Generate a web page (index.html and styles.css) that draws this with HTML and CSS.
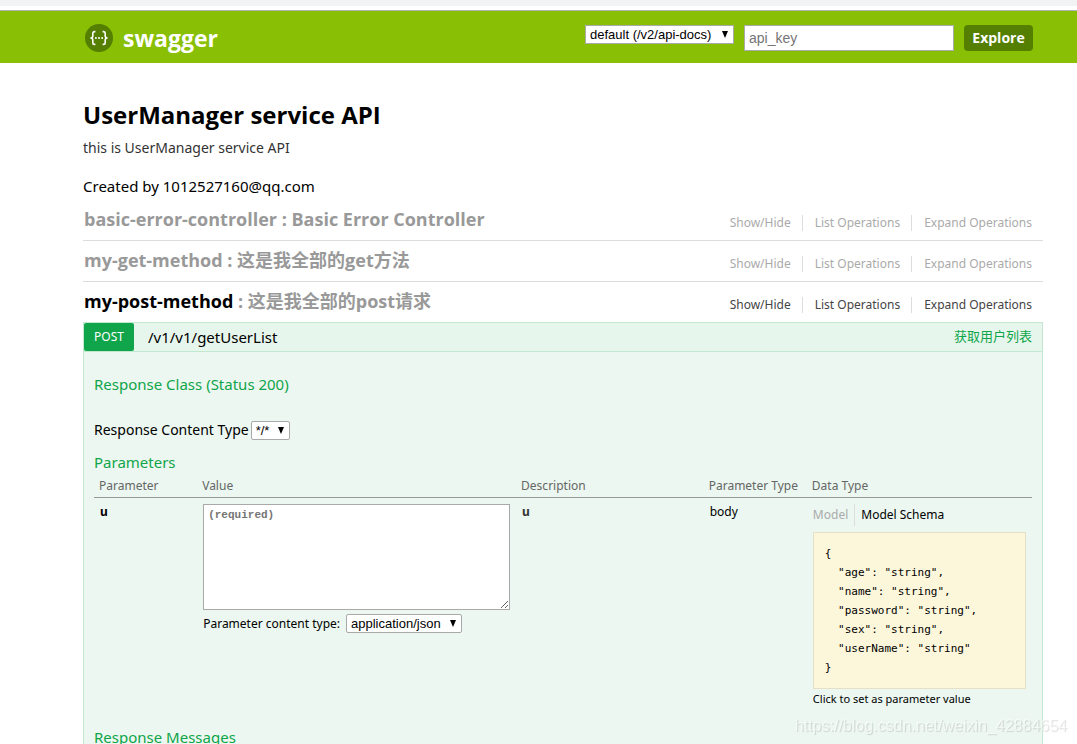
FILE: index.html
```html
<!DOCTYPE html>
<html lang="en">
<head>
<meta charset="utf-8">
<title>Swagger UI</title>
<link rel="stylesheet" href="styles.css">
</head>
<body>
<div class="browser-edge"></div>
<header class="header">
  <a class="logo" href="#">
    <svg class="logo-mark" viewBox="0 0 28 28" aria-hidden="true">
      <circle cx="14" cy="14" r="14" fill="#547f00"/>
      <g fill="none" stroke="#fff" stroke-width="1.6">
        <path d="M10.4 7.6H9.4Q7.8 7.6 7.8 9.3V12Q7.8 14 5.4 14Q7.8 14 7.8 16V18.7Q7.8 20.4 9.4 20.4H10.4"/>
        <path d="M17.6 7.6h1Q20.2 7.6 20.2 9.3V12Q20.2 14 22.6 14Q20.2 14 20.2 16V18.7Q20.2 20.4 18.6 20.4H17.6"/>
      </g>
      <g fill="#fff"><circle cx="10.9" cy="14" r="1"/><circle cx="14" cy="14" r="1"/><circle cx="17.1" cy="14" r="1"/></g>
    </svg>
    <span>swagger</span>
  </a>
  <form class="api-selector">
    <span class="select select-api">
      <select aria-label="API definition"><option>default (/v2/api-docs)</option></select>
      <svg class="arrow" viewBox="0 0 6 7" aria-hidden="true"><path d="M0 0h6L3 7z"/></svg>
    </span>
    <input class="api-key" type="text" placeholder="api_key" aria-label="api_key">
    <button class="explore" type="button">Explore</button>
  </form>
</header>
<main class="content">
  <h1 class="title">UserManager service API</h1>
  <p class="description">this is UserManager service API</p>
  <p class="contact">Created by 1012527160@qq.com</p>

  <ul class="resources">
    <li class="resource">
      <div class="heading">
        <h2><a href="#">basic-error-controller</a> : Basic Error Controller</h2>
        <ul class="options"><li><a href="#">Show/Hide</a></li><li><a href="#">List Operations</a></li><li><a href="#">Expand Operations</a></li></ul>
      </div>
    </li>
    <li class="resource">
      <div class="heading">
        <h2><a href="#">my-get-method</a> : 这是我全部的get方法</h2>
        <ul class="options"><li><a href="#">Show/Hide</a></li><li><a href="#">List Operations</a></li><li><a href="#">Expand Operations</a></li></ul>
      </div>
    </li>
    <li class="resource active">
      <div class="heading">
        <h2><a href="#">my-post-method</a> : 这是我全部的post请求</h2>
        <ul class="options"><li><a href="#">Show/Hide</a></li><li><a href="#">List Operations</a></li><li><a href="#">Expand Operations</a></li></ul>
      </div>
      <section class="operation">
        <div class="operation-heading">
          <a class="method" href="#">POST</a>
          <a class="path" href="#">/v1/v1/getUserList</a>
          <a class="summary" href="#">获取用户列表</a>
        </div>
        <div class="operation-body">
          <h3 class="response-class">Response Class (Status 200)</h3>
          <div class="content-type">
            <label for="response-type">Response Content Type</label>
            <span class="select select-any">
              <select id="response-type"><option>*/*</option></select>
              <svg class="arrow" viewBox="0 0 6 7" aria-hidden="true"><path d="M0 0h6L3 7z"/></svg>
            </span>
          </div>
          <h3>Parameters</h3>
          <table class="params">
            <colgroup><col class="col-name"><col class="col-value"><col class="col-desc"><col class="col-kind"><col class="col-data"></colgroup>
            <thead>
              <tr><th>Parameter</th><th>Value</th><th>Description</th><th>Parameter Type</th><th>Data Type</th></tr>
            </thead>
            <tbody>
              <tr>
                <td class="strong"><label for="param-u">u</label></td>
                <td>
                  <textarea id="param-u" class="body-text" placeholder="(required)"></textarea>
                  <div class="param-type">
                    <label for="param-type">Parameter content type:</label>
                    <span class="select select-json">
                      <select id="param-type"><option>application/json</option></select>
                      <svg class="arrow" viewBox="0 0 6 7" aria-hidden="true"><path d="M0 0h6L3 7z"/></svg>
                    </span>
                  </div>
                </td>
                <td class="strong muted">u</td>
                <td>body</td>
                <td>
                  <div class="tabs"><a class="tab" href="#">Model</a><a class="tab selected" href="#">Model Schema</a></div>
                  <pre class="schema">{
  "age": "string",
  "name": "string",
  "password": "string",
  "sex": "string",
  "userName": "string"
}</pre>
                  <small class="notice">Click to set as parameter value</small>
                </td>
              </tr>
            </tbody>
          </table>
          <h3>Response Messages</h3>
        </div>
      </section>
    </li>
  </ul>
</main>
<div class="watermark">https://blog.csdn.net/weixin_42884654</div>
</body>
</html>
```
FILE: styles.css
```css
* { box-sizing: border-box; }

body {
  margin: 0;
  height: 100vh;
  overflow: hidden;
  background: #fff;
  color: #000;
  font-family: "Noto Sans", "Noto Sans CJK SC", sans-serif;
  font-size: 12px;
}

h1, h2, h3, p, ul, pre { margin: 0; }
ul { padding: 0; list-style: none; }
a { color: inherit; text-decoration: none; }

.browser-edge {
  height: 11px;
  border-top: 6px solid #f1f3f4;
  border-bottom: 1px solid #b4b4b4;
}

.header {
  display: flex;
  align-items: center;
  justify-content: space-between;
  height: 52px;
  padding: 1px 44px 0 85px;
  background: #89bf04;
}

.logo {
  display: flex;
  align-items: center;
  gap: 10px;
  color: #fff;
  font-family: "Open Sans", sans-serif;
  font-size: 23px;
  font-weight: 700;
  line-height: 26px;
}
.logo-mark { width: 28px; height: 28px; }

.api-selector {
  display: flex;
  align-items: flex-start;
  gap: 10px;
}

.select {
  display: inline-grid;
  align-items: center;
}
.select select, .select .arrow { grid-area: 1 / 1; }
.select select {
  appearance: none;
  width: 100%;
  height: 19px;
  margin: 0;
  padding: 0 4px;
  border: 1px solid #a9a9a9;
  border-radius: 2px;
  background: #fff;
  color: #000;
  font: 13px/17px "Liberation Sans", Arial, sans-serif;
}
.arrow {
  justify-self: end;
  width: 6px;
  height: 7px;
  margin-right: 6px;
  pointer-events: none;
}
.select-api { width: 149px; }
.select-api select { border-radius: 0; }
.select-any { width: 39px; }
.select-json { width: 116px; }

.api-key {
  width: 210px;
  height: 26px;
  padding: 0 4px;
  border: 1px solid #a9a9a9;
  color: #000;
  font: 14px "Liberation Sans", Arial, sans-serif;
}
.api-key::placeholder { color: #757575; }

.explore {
  width: 69px;
  height: 26px;
  padding: 0;
  border: 0;
  border-radius: 4px;
  background: #547f00;
  color: #fff;
  font: 700 14px/26px "Open Sans", sans-serif;
}

.content { padding: 36px 34px 0 83px; }
.title {
  font-family: "Open Sans", sans-serif;
  font-size: 24px;
  line-height: 32px;
}
.description {
  margin-top: 7px;
  color: #333;
  font-size: 14px;
  line-height: 20px;
}
.contact {
  margin-top: 17px;
  font-size: 15px;
  line-height: 22px;
}

.resource { border-bottom: 1px solid #ddd; }
.resource.active { border-bottom: 0; }
.heading {
  display: flex;
  align-items: flex-start;
  justify-content: space-between;
  height: 40px;
  padding: 0 11px 0 1px;
  color: #999;
}
.resource:first-child .heading { height: 43px; padding-top: 3px; }
.heading h2 {
  padding-top: 5px;
  font-family: "Open Sans", "Noto Sans CJK SC", sans-serif;
  font-size: 18px;
  line-height: 28px;
}
.active h2 a { color: #000; }
.options {
  display: flex;
  padding-top: 15px;
  color: #aaa;
  line-height: 16px;
}
.options li + li {
  margin-left: 11px;
  padding-left: 12px;
  border-left: 1px solid #ddd;
}
.active .options { color: #444; }

.operation-heading {
  display: flex;
  align-items: center;
  height: 30px;
  padding-right: 10px;
  border: 1px solid #c3e8d1;
  background: #e7f6ec;
}
.method {
  width: 50px;
  border-radius: 2px;
  background: #10a54a;
  color: #fff;
  line-height: 28px;
  text-align: center;
}
.path {
  flex: 1;
  padding-left: 14px;
  font-size: 15px;
  line-height: 28px;
}
.summary {
  color: #10a54a;
  font-size: 13px;
  line-height: 26px;
  align-self: flex-start;
}

.operation-body {
  padding: 20px 10px;
  border: 1px solid #c3e8d1;
  border-top: 0;
  background: #ebf7f0;
}
.operation-body h3 {
  color: #10a54a;
  font-size: 15px;
  font-weight: 400;
  line-height: 24px;
}
.content-type {
  display: flex;
  align-items: center;
  gap: 2px;
  margin: 24px 0 10px;
  font-size: 14px;
  line-height: 20px;
}

.params {
  width: 100%;
  margin-bottom: 10px;
  border-collapse: collapse;
  table-layout: fixed;
}
.col-name { width: 11%; }
.col-value { width: 34%; }
.col-desc { width: 20%; }
.col-kind { width: 11%; }
.col-data { width: 24%; }
.params th {
  padding: 2px 5px;
  border-bottom: 1px solid #999;
  color: #666;
  font-weight: 400;
  line-height: 19px;
  text-align: left;
  white-space: nowrap;
}
.params td {
  padding: 6px;
  line-height: 16px;
  vertical-align: top;
}
.params .strong { font-weight: 700; }
.muted { color: #333; }

.body-text {
  display: block;
  width: 100%;
  height: 106px;
  padding: 2px 4px;
  border: 1px solid #a9a9a9;
  background: #fff;
  font: 700 11px/16px "Liberation Mono", monospace;
}
.body-text::placeholder { color: #757575; }
.param-type {
  display: flex;
  align-items: center;
  gap: 6px;
  padding-top: 4px;
  white-space: nowrap;
}

.tabs {
  display: flex;
  line-height: 22px;
}
.tab { padding-right: 6px; color: #aaa; }
.tab.selected {
  padding-left: 6px;
  border-left: 1px solid #ddd;
  color: #000;
}
.schema {
  margin-top: 6px;
  padding: 11px;
  border: 1px solid #e5e0c6;
  background: #fcf6db;
  font: 11px/19px "DejaVu Sans Mono", monospace;
}
.notice { font-size: 11px; line-height: 20px; }

.watermark {
  position: fixed;
  right: 10px;
  bottom: 8px;
  color: rgba(255, 255, 255, 0.6);
  font: 16px/20px "Liberation Sans", Arial, sans-serif;
  text-shadow: 1px 1px 1px rgba(0, 0, 0, 0.14);
  pointer-events: none;
}
```
